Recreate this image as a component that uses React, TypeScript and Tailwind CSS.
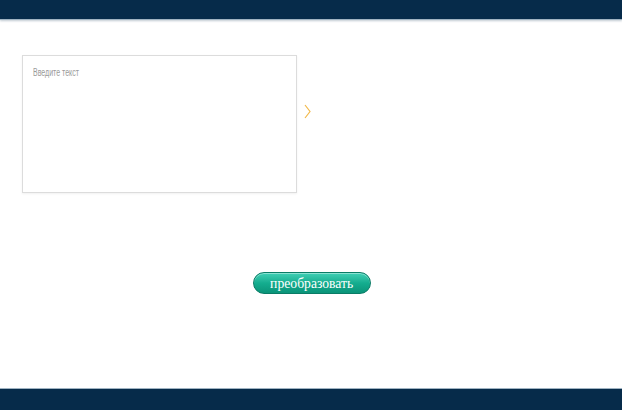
export default function App() {
  return (
    <div className="flex h-[410px] w-[622px] flex-col bg-white">
      <header className="h-[20px] shrink-0 border-b border-[#9fb3c2] bg-[#062b4a] shadow-[0_1px_2px_rgba(6,43,74,0.25)]" />
      <main className="flex flex-1 flex-col">
        <div className="flex items-start pl-[22px] pt-[35px]">
          <div className="h-[138px] w-[275px] border border-[#dcdcdc] px-[10px] pt-[11px] text-[10px] leading-none shadow-[0_1px_2px_rgba(0,0,0,0.06)]">
            <span className="inline-block origin-left [transform:scaleX(0.7)] font-['Liberation_Sans',sans-serif] text-[#9a9a9a]">
              Введите текст
            </span>
          </div>
          <svg className="ml-[7px] mt-[49px]" width="7" height="15" viewBox="0 0 7 15">
            <path d="M1 1 L6 7.5 L1 14" fill="none" stroke="#f2b94a" strokeWidth="1.2" />
          </svg>
        </div>
        <div className="flex justify-center pl-[1px] pt-[79px]">
          <button className="flex h-[22px] w-[118px] items-center justify-center rounded-full border border-[#0a7c66] bg-gradient-to-b from-[#3fd1b6] via-[#14ad8f] to-[#0b9479] font-['Liberation_Serif',serif] text-[15px] leading-[20px] text-white shadow-[inset_0_1px_0_rgba(255,255,255,0.4)]">
            <span className="inline-block [transform:scaleX(0.91)]">преобразовать</span>
          </button>
        </div>
      </main>
      <footer className="h-[22px] shrink-0 border-t border-[#9fb3c2] bg-[#062b4a]" />
    </div>
  );
}
